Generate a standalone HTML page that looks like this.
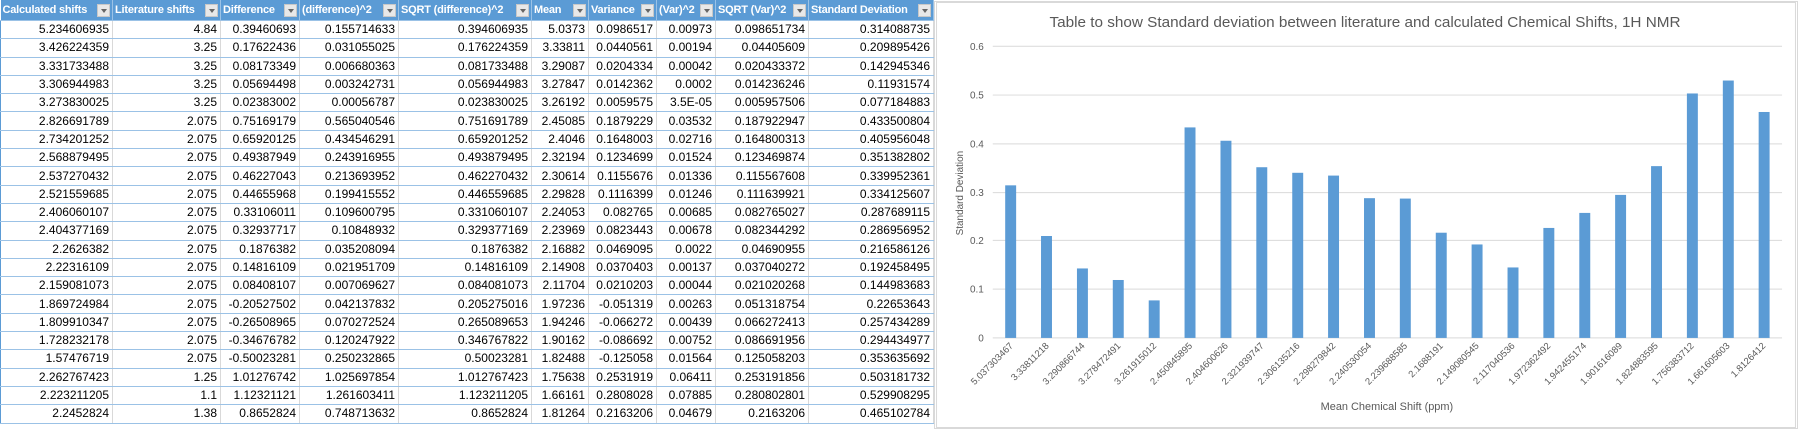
<!DOCTYPE html>
<html><head><meta charset="utf-8"><style>
body{margin:0;width:1799px;height:430px;overflow:hidden;background:#fff;font-family:"Liberation Sans",sans-serif;position:relative}
table{position:absolute;left:0;top:0;border-collapse:collapse;table-layout:fixed;font-size:12px;color:#000}
td{height:17.3px;padding:0 3px 0 0;text-align:right;border-top:1px solid #9bc2e6;border-bottom:1px solid #9bc2e6;border-left:1px solid #d9d9d9;border-right:1px solid #d9d9d9;white-space:nowrap;overflow:hidden;line-height:17px}
tr td:first-child{border-left:1px solid #5b9bd5}
th{height:20px;background:#5b9bd5;color:#fff;font-weight:bold;text-align:left;padding:0 0 0 2px;white-space:nowrap;overflow:hidden;position:relative;border-right:1px solid #9bc2e6;font-size:11px;letter-spacing:-0.2px}
th span.b{position:absolute;right:2px;top:4px;width:13px;height:13px;background:#e8e8e8;border:1px solid #c8c8c8;box-sizing:border-box}
th span.b:after{content:"";position:absolute;left:2.5px;top:4px;border-left:3.5px solid transparent;border-right:3.5px solid transparent;border-top:4px solid #666}
#chart{position:absolute;left:934px;top:1px;width:864px;height:428px;border:1px solid #d9d9d9;box-sizing:border-box}
</style></head><body>
<table>
<colgroup><col style="width:112px"><col style="width:108px"><col style="width:79px"><col style="width:99px"><col style="width:133px"><col style="width:57px"><col style="width:68px"><col style="width:59px"><col style="width:93px"><col style="width:125px"></colgroup>
<tr><th>Calculated shifts<span class="b"></span></th><th>Literature shifts<span class="b"></span></th><th>Difference<span class="b"></span></th><th>(difference)^2<span class="b"></span></th><th>SQRT (difference)^2<span class="b"></span></th><th>Mean<span class="b"></span></th><th>Variance<span class="b"></span></th><th>(Var)^2<span class="b"></span></th><th>SQRT (Var)^2<span class="b"></span></th><th>Standard Deviation<span class="b"></span></th></tr>
<tr><td>5.234606935</td><td>4.84</td><td>0.39460693</td><td>0.155714633</td><td>0.394606935</td><td>5.0373</td><td>0.0986517</td><td>0.00973</td><td>0.098651734</td><td>0.314088735</td></tr>
<tr><td>3.426224359</td><td>3.25</td><td>0.17622436</td><td>0.031055025</td><td>0.176224359</td><td>3.33811</td><td>0.0440561</td><td>0.00194</td><td>0.04405609</td><td>0.209895426</td></tr>
<tr><td>3.331733488</td><td>3.25</td><td>0.08173349</td><td>0.006680363</td><td>0.081733488</td><td>3.29087</td><td>0.0204334</td><td>0.00042</td><td>0.020433372</td><td>0.142945346</td></tr>
<tr><td>3.306944983</td><td>3.25</td><td>0.05694498</td><td>0.003242731</td><td>0.056944983</td><td>3.27847</td><td>0.0142362</td><td>0.0002</td><td>0.014236246</td><td>0.11931574</td></tr>
<tr><td>3.273830025</td><td>3.25</td><td>0.02383002</td><td>0.00056787</td><td>0.023830025</td><td>3.26192</td><td>0.0059575</td><td>3.5E-05</td><td>0.005957506</td><td>0.077184883</td></tr>
<tr><td>2.826691789</td><td>2.075</td><td>0.75169179</td><td>0.565040546</td><td>0.751691789</td><td>2.45085</td><td>0.1879229</td><td>0.03532</td><td>0.187922947</td><td>0.433500804</td></tr>
<tr><td>2.734201252</td><td>2.075</td><td>0.65920125</td><td>0.434546291</td><td>0.659201252</td><td>2.4046</td><td>0.1648003</td><td>0.02716</td><td>0.164800313</td><td>0.405956048</td></tr>
<tr><td>2.568879495</td><td>2.075</td><td>0.49387949</td><td>0.243916955</td><td>0.493879495</td><td>2.32194</td><td>0.1234699</td><td>0.01524</td><td>0.123469874</td><td>0.351382802</td></tr>
<tr><td>2.537270432</td><td>2.075</td><td>0.46227043</td><td>0.213693952</td><td>0.462270432</td><td>2.30614</td><td>0.1155676</td><td>0.01336</td><td>0.115567608</td><td>0.339952361</td></tr>
<tr><td>2.521559685</td><td>2.075</td><td>0.44655968</td><td>0.199415552</td><td>0.446559685</td><td>2.29828</td><td>0.1116399</td><td>0.01246</td><td>0.111639921</td><td>0.334125607</td></tr>
<tr><td>2.406060107</td><td>2.075</td><td>0.33106011</td><td>0.109600795</td><td>0.331060107</td><td>2.24053</td><td>0.082765</td><td>0.00685</td><td>0.082765027</td><td>0.287689115</td></tr>
<tr><td>2.404377169</td><td>2.075</td><td>0.32937717</td><td>0.10848932</td><td>0.329377169</td><td>2.23969</td><td>0.0823443</td><td>0.00678</td><td>0.082344292</td><td>0.286956952</td></tr>
<tr><td>2.2626382</td><td>2.075</td><td>0.1876382</td><td>0.035208094</td><td>0.1876382</td><td>2.16882</td><td>0.0469095</td><td>0.0022</td><td>0.04690955</td><td>0.216586126</td></tr>
<tr><td>2.22316109</td><td>2.075</td><td>0.14816109</td><td>0.021951709</td><td>0.14816109</td><td>2.14908</td><td>0.0370403</td><td>0.00137</td><td>0.037040272</td><td>0.192458495</td></tr>
<tr><td>2.159081073</td><td>2.075</td><td>0.08408107</td><td>0.007069627</td><td>0.084081073</td><td>2.11704</td><td>0.0210203</td><td>0.00044</td><td>0.021020268</td><td>0.144983683</td></tr>
<tr><td>1.869724984</td><td>2.075</td><td>-0.20527502</td><td>0.042137832</td><td>0.205275016</td><td>1.97236</td><td>-0.051319</td><td>0.00263</td><td>0.051318754</td><td>0.22653643</td></tr>
<tr><td>1.809910347</td><td>2.075</td><td>-0.26508965</td><td>0.070272524</td><td>0.265089653</td><td>1.94246</td><td>-0.066272</td><td>0.00439</td><td>0.066272413</td><td>0.257434289</td></tr>
<tr><td>1.728232178</td><td>2.075</td><td>-0.34676782</td><td>0.120247922</td><td>0.346767822</td><td>1.90162</td><td>-0.086692</td><td>0.00752</td><td>0.086691956</td><td>0.294434977</td></tr>
<tr><td>1.57476719</td><td>2.075</td><td>-0.50023281</td><td>0.250232865</td><td>0.50023281</td><td>1.82488</td><td>-0.125058</td><td>0.01564</td><td>0.125058203</td><td>0.353635692</td></tr>
<tr><td>2.262767423</td><td>1.25</td><td>1.01276742</td><td>1.025697854</td><td>1.012767423</td><td>1.75638</td><td>0.2531919</td><td>0.06411</td><td>0.253191856</td><td>0.503181732</td></tr>
<tr><td>2.223211205</td><td>1.1</td><td>1.12321121</td><td>1.261603411</td><td>1.123211205</td><td>1.66161</td><td>0.2808028</td><td>0.07885</td><td>0.280802801</td><td>0.529908295</td></tr>
<tr><td>2.2452824</td><td>1.38</td><td>0.8652824</td><td>0.748713632</td><td>0.8652824</td><td>1.81264</td><td>0.2163206</td><td>0.04679</td><td>0.2163206</td><td>0.465102784</td></tr>
</table>

<svg id="chart" width="864" height="428" viewBox="934 1 864 428" xmlns="http://www.w3.org/2000/svg" font-family="Liberation Sans, sans-serif">
<rect x="934.5" y="1.5" width="863" height="427" fill="#fff" stroke="#d9d9d9"/>
<text x="1365" y="26" font-size="15" fill="#595959" text-anchor="middle" textLength="634" lengthAdjust="spacingAndGlyphs">Table to show  Standard deviation between literature and calculated Chemical Shifts, 1H NMR</text>
<g stroke="#d9d9d9" stroke-width="1">
<line x1="991" x2="1784" y1="45.5" y2="45.5"/><line x1="991" x2="1784" y1="94.5" y2="94.5"/><line x1="991" x2="1784" y1="143.5" y2="143.5"/><line x1="991" x2="1784" y1="192.5" y2="192.5"/><line x1="991" x2="1784" y1="240.5" y2="240.5"/><line x1="991" x2="1784" y1="289.5" y2="289.5"/><line x1="991" x2="1784" y1="338.5" y2="338.5"/>
</g>
<g font-size="10" fill="#595959" text-anchor="end">
<text x="982" y="49">0.6</text><text x="982" y="98">0.5</text><text x="982" y="147">0.4</text><text x="982" y="196">0.3</text><text x="982" y="244">0.2</text><text x="982" y="293">0.1</text><text x="982" y="342">0</text>
</g>
<text transform="translate(961,193) rotate(-90)" font-size="10" fill="#595959" text-anchor="middle">Standard Deviation</text>
<g fill="#5b9bd5">
<rect x="1003.5" y="185.2" width="11" height="153.3"/>
<rect x="1039.5" y="236.1" width="11" height="102.4"/>
<rect x="1075.6" y="268.7" width="11" height="69.8"/>
<rect x="1111.6" y="280.3" width="11" height="58.2"/>
<rect x="1147.7" y="300.8" width="11" height="37.7"/>
<rect x="1183.7" y="127" width="11" height="211.5"/>
<rect x="1219.8" y="140.4" width="11" height="198.1"/>
<rect x="1255.8" y="167" width="11" height="171.5"/>
<rect x="1291.9" y="172.6" width="11" height="165.9"/>
<rect x="1327.9" y="175.4" width="11" height="163.1"/>
<rect x="1364" y="198.1" width="11" height="140.4"/>
<rect x="1400" y="198.5" width="11" height="140"/>
<rect x="1436.1" y="232.8" width="11" height="105.7"/>
<rect x="1472.1" y="244.6" width="11" height="93.9"/>
<rect x="1508.2" y="267.7" width="11" height="70.8"/>
<rect x="1544.2" y="228" width="11" height="110.5"/>
<rect x="1580.3" y="212.9" width="11" height="125.6"/>
<rect x="1616.3" y="194.8" width="11" height="143.7"/>
<rect x="1652.4" y="165.9" width="11" height="172.6"/>
<rect x="1688.4" y="92.9" width="11" height="245.6"/>
<rect x="1724.5" y="79.9" width="11" height="258.6"/>
<rect x="1760.5" y="111.5" width="11" height="227"/>
</g>
<g font-size="9.5" fill="#595959" text-anchor="end">
<text transform="translate(1012,347) rotate(-45)">5.037303467</text>
<text transform="translate(1048,347) rotate(-45)">3.33811218</text>
<text transform="translate(1084,347) rotate(-45)">3.290866744</text>
<text transform="translate(1120,347) rotate(-45)">3.278472491</text>
<text transform="translate(1156,347) rotate(-45)">3.261915012</text>
<text transform="translate(1192,347) rotate(-45)">2.450845895</text>
<text transform="translate(1228,347) rotate(-45)">2.404600626</text>
<text transform="translate(1264,347) rotate(-45)">2.321939747</text>
<text transform="translate(1300,347) rotate(-45)">2.306135216</text>
<text transform="translate(1336,347) rotate(-45)">2.298279842</text>
<text transform="translate(1372,347) rotate(-45)">2.240530054</text>
<text transform="translate(1408,347) rotate(-45)">2.239688585</text>
<text transform="translate(1444,347) rotate(-45)">2.1688191</text>
<text transform="translate(1480,347) rotate(-45)">2.149080545</text>
<text transform="translate(1516,347) rotate(-45)">2.117040536</text>
<text transform="translate(1552,347) rotate(-45)">1.972362492</text>
<text transform="translate(1588,347) rotate(-45)">1.942455174</text>
<text transform="translate(1624,347) rotate(-45)">1.901616089</text>
<text transform="translate(1660,347) rotate(-45)">1.824883595</text>
<text transform="translate(1696,347) rotate(-45)">1.756383712</text>
<text transform="translate(1732,347) rotate(-45)">1.661605603</text>
<text transform="translate(1768,347) rotate(-45)">1.8126412</text>
</g>
<text x="1387" y="411" font-size="11" fill="#595959" text-anchor="middle">Mean Chemical Shift (ppm)</text>
</svg>
</body></html>
